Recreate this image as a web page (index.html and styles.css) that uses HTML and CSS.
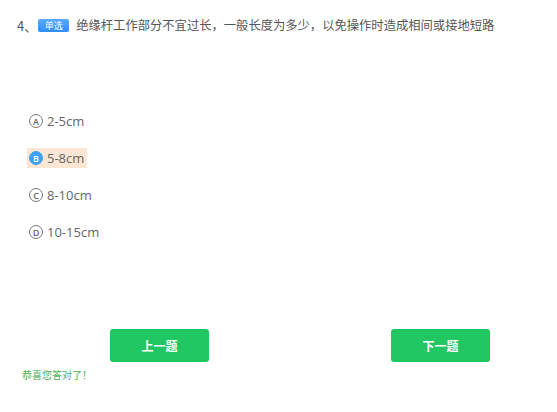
FILE: index.html
```html
<!DOCTYPE html>
<html lang="zh">
<head>
<meta charset="utf-8">
<link rel="stylesheet" href="styles.css">
</head>
<body>
<div class="page">
  <div class="question">
    <span class="num">4、</span><span class="badge">单选</span><span class="qtext">绝缘杆工作部分不宜过长，一般长度为多少，以免操作时造成相间或接地短路</span>
  </div>
  <ul class="options">
    <li class="option"><span class="mark">A</span><span class="otext">2-5cm</span></li>
    <li class="option selected"><span class="mark">B</span><span class="otext">5-8cm</span></li>
    <li class="option"><span class="mark">C</span><span class="otext">8-10cm</span></li>
    <li class="option"><span class="mark">D</span><span class="otext">10-15cm</span></li>
  </ul>
  <div class="buttons">
    <button class="btn">上一题</button>
    <button class="btn">下一题</button>
  </div>
  <div class="feedback">恭喜您答对了！</div>
</div>
</body>
</html>
```

FILE: styles.css
```css
* { box-sizing: border-box; }
html, body { margin: 0; padding: 0; background: #fff; }
body {
  font-family: "Noto Sans CJK SC", "Noto Sans", sans-serif;
  color: #555;
}
.page {
  width: 557px;
  height: 412px;
  padding: 16px 0 0 17px;
}
.question {
  display: flex;
  align-items: center;
  height: 18px;
  font-size: 13px;
  color: #555;
}
.num { font-size: 13px; }
.badge {
  display: inline-flex;
  align-items: center;
  justify-content: center;
  width: 31px;
  height: 13px;
  margin-left: 1px;
  border-radius: 2px;
  background: linear-gradient(#5aabff, #2f8cf5);
  color: #fff;
  font-size: 9px;
  line-height: 13px;
}
.qtext {
  margin-left: 7px;
  font-size: 12.3px;
}
.options {
  list-style: none;
  margin: 77px 0 0 10px;
  padding: 0;
  display: flex;
  flex-direction: column;
  align-items: flex-start;
  gap: 17px;
}
.option {
  display: flex;
  align-items: center;
  height: 20px;
  padding: 0 3px 0 2px;
  font-family: "Open Sans", "Noto Sans", sans-serif;
  font-size: 13px;
  color: #666;
}
.option.selected { background: #fde6d4; }
.mark {
  display: inline-flex;
  align-items: center;
  justify-content: center;
  width: 14px;
  height: 14px;
  border: 1px solid #777;
  border-radius: 50%;
  font-size: 9px;
  font-weight: 600;
  line-height: 1;
  color: #666;
  margin-right: 4px;
}
.selected .mark {
  background: #3da2f5;
  border-color: #3da2f5;
  color: #fff;
}
.buttons {
  display: flex;
  margin: 87px 0 0 93px;
  gap: 182px;
}
.btn {
  width: 99px;
  height: 33px;
  border: none;
  border-radius: 3px;
  background: #21c762;
  color: #fff;
  font-family: "Noto Sans CJK SC", sans-serif;
  font-size: 12px;
  font-weight: bold;
  padding: 0;
}
.feedback {
  margin: 5px 0 0 5px;
  font-size: 10px;
  color: #4caf50;
}
```
